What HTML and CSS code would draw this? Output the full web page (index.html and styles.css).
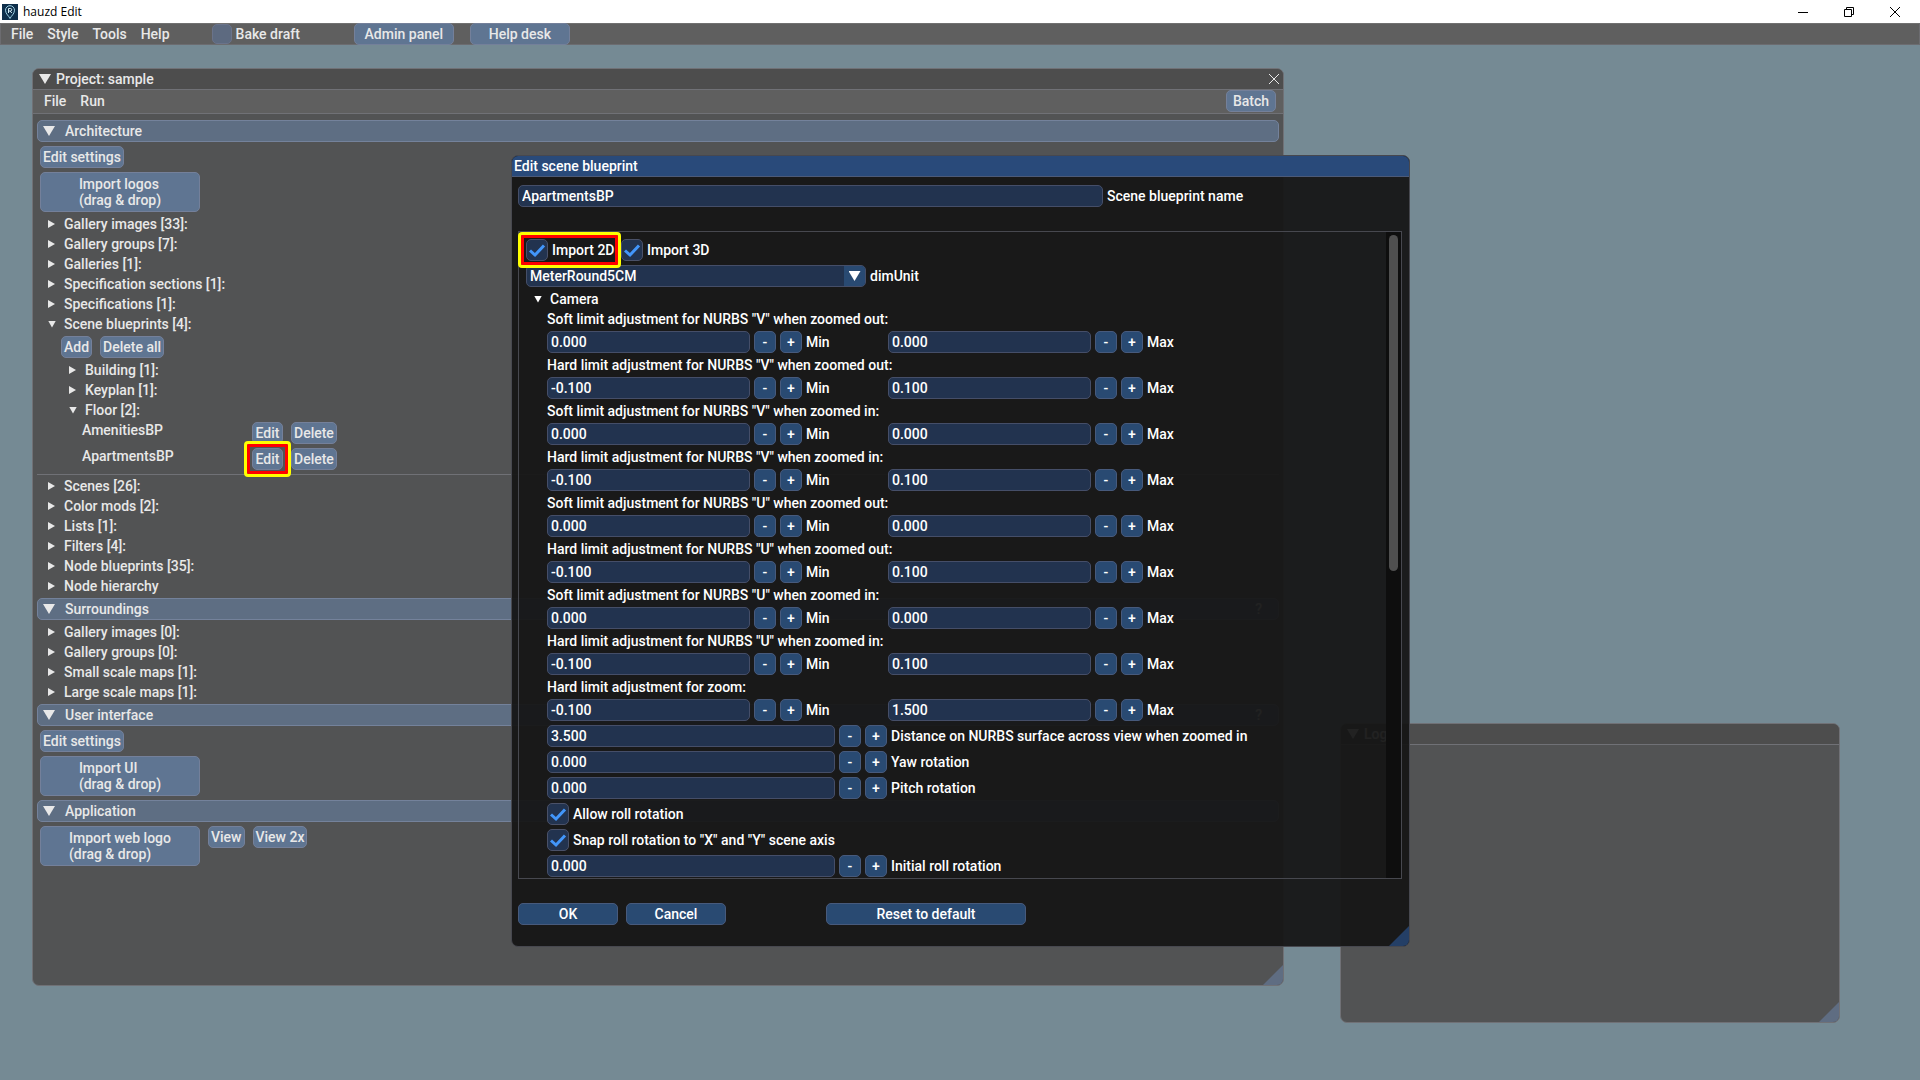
FILE: index.html
```
<!DOCTYPE html>
<html lang="en">
<head>
    <meta charset="UTF-8">
    <meta name="viewport" content="width=device-width, initial-scale=1.0">
    <title>hauzd Edit</title>
    <link rel="stylesheet" href="styles.css">
</head>
<body>
    <header class="titlebar">
        <svg class="logo" viewBox="0 0 16 16">
            <rect width="16" height="16" fill="#0f2f4b"/>
            <path d="M8 14.5 C7 12 3.5 10 3.5 6.2 A4.5 4.5 0 0 1 12.5 6.2 C12.5 10 9 12 8 14.5 Z" fill="none" stroke="#9fd3e6"/>
            <path d="M6.5 9 V4.500 H8.500 A1.200 1.200 0 0 1 8.500 7 H6.500 M8 7 L9.800 9" fill="none" stroke="#d5eef6"/>
        </svg>
        <span class="app-name">hauzd Edit</span>
        <div class="window-controls">
            <button aria-label="Minimize"><svg viewBox="0 0 10 10"><path d="M0 5.500H10"/></svg></button>
            <button aria-label="Restore"><svg viewBox="0 0 10 10"><path d="M.5 2.500H7.500V9.500H.5ZM2.500 2.500V.5H9.500V7.500H7.500"/></svg></button>
            <button aria-label="Close"><svg viewBox="0 0 10 10"><path d="M0 0L10 10M10 0L0 10"/></svg></button>
        </div>
    </header>

    <nav class="menubar">
        <a href="#">File</a>
        <a href="#">Style</a>
        <a href="#">Tools</a>
        <a href="#">Help</a>
        <label class="check bake"><input type="checkbox"> Bake draft</label>
        <button class="btn wide">Admin panel</button>
        <button class="btn wide">Help desk</button>
    </nav>

    <main class="desktop">
        <section class="window project">
            <div class="window-title">
                <span class="arrow down"></span>
                <span>Project: sample</span>
                <button class="close" aria-label="Close"><svg viewBox="0 0 12 12"><path d="M1 1L11 11M11 1L1 11"/></svg></button>
            </div>
            <nav class="window-menu">
                <a href="#">File</a>
                <a href="#">Run</a>
                <button class="btn batch">Batch</button>
            </nav>
            <div class="window-body">
                <div class="section"><span class="arrow down"></span>Architecture</div>
                <div class="row"><button class="btn">Edit settings</button></div>
                <div class="row"><button class="btn drop"><span>Import logos<br>(drag &amp; drop)</span></button></div>
                <div class="node"><span class="arrow small right"></span>Gallery images [33]:</div>
                <div class="node"><span class="arrow small right"></span>Gallery groups [7]:</div>
                <div class="node"><span class="arrow small right"></span>Galleries [1]:</div>
                <div class="node"><span class="arrow small right"></span>Specification sections [1]:</div>
                <div class="node"><span class="arrow small right"></span>Specifications [1]:</div>
                <div class="node"><span class="arrow small down"></span>Scene blueprints [4]:</div>
                <div class="row level-1">
                    <button class="btn">Add</button>
                    <button class="btn">Delete all</button>
                </div>
                <div class="node level-1"><span class="arrow small right"></span>Building [1]:</div>
                <div class="node level-1"><span class="arrow small right"></span>Keyplan [1]:</div>
                <div class="node level-1"><span class="arrow small down"></span>Floor [2]:</div>
                <div class="row level-2">
                    <span class="bp-name">AmenitiesBP</span>
                    <button class="btn">Edit</button>
                    <button class="btn">Delete</button>
                </div>
                <div class="row level-2">
                    <span class="bp-name">ApartmentsBP</span>
                    <span class="marked"><button class="btn">Edit</button></span>
                    <button class="btn">Delete</button>
                </div>
                <hr>
                <div class="node"><span class="arrow small right"></span>Scenes [26]:</div>
                <div class="node"><span class="arrow small right"></span>Color mods [2]:</div>
                <div class="node"><span class="arrow small right"></span>Lists [1]:</div>
                <div class="node"><span class="arrow small right"></span>Filters [4]:</div>
                <div class="node"><span class="arrow small right"></span>Node blueprints [35]:</div>
                <div class="node"><span class="arrow small right"></span>Node hierarchy</div>
                <div class="section"><span class="arrow down"></span>Surroundings<span class="hint">?</span></div>
                <div class="node"><span class="arrow small right"></span>Gallery images [0]:</div>
                <div class="node"><span class="arrow small right"></span>Gallery groups [0]:</div>
                <div class="node"><span class="arrow small right"></span>Small scale maps [1]:</div>
                <div class="node"><span class="arrow small right"></span>Large scale maps [1]:</div>
                <div class="section"><span class="arrow down"></span>User interface<span class="hint">?</span></div>
                <div class="row"><button class="btn">Edit settings</button></div>
                <div class="row"><button class="btn drop"><span>Import UI<br>(drag &amp; drop)</span></button></div>
                <div class="section"><span class="arrow down"></span>Application</div>
                <div class="row">
                    <button class="btn drop"><span>Import web logo<br>(drag &amp; drop)</span></button>
                    <button class="btn">View</button>
                    <button class="btn">View 2x</button>
                </div>
            </div>
        </section>

        <section class="window log">
            <div class="window-title">
                <span class="arrow down"></span>
                <span>Log</span>
            </div>
        </section>

        <form class="window dialog">
            <div class="window-title">Edit scene blueprint</div>
            <div class="dialog-body">
                <div class="field">
                    <input type="text" id="bp-name" value="ApartmentsBP">
                    <label for="bp-name">Scene blueprint name</label>
                </div>
                <div class="panel">
                    <div class="panel-content">
                        <div class="field imports">
                            <label class="check marked"><input type="checkbox" checked> Import 2D</label>
                            <label class="check"><input type="checkbox" checked> Import 3D</label>
                        </div>
                        <div class="field">
                            <span class="select">
                                <select id="dim-unit"><option>MeterRound5CM</option></select>
                                <span class="select-arrow"><span class="arrow down"></span></span>
                            </span>
                            <label for="dim-unit">dimUnit</label>
                        </div>
                        <div class="node camera"><span class="arrow small down"></span>Camera</div>
                        <div class="settings" id="settings"></div>
                    </div>
                    <div class="scrollbar"><div class="thumb"></div></div>
                </div>
                <div class="actions">
                    <button type="button" class="btn wide">OK</button>
                    <button type="button" class="btn wide">Cancel</button>
                    <button type="button" class="btn reset">Reset to default</button>
                </div>
            </div>
        </form>
    </main>

    <script src="script.js"></script>
</body>
</html>
```
FILE: styles.css
```
* {
    box-sizing: border-box;
}

body {
    margin: 0;
    height: 100vh;
    display: flex;
    flex-direction: column;
    overflow: hidden;
    background-color: #758a94;
    font-family: Roboto, sans-serif;
    font-size: 14px;
    font-weight: 500;
    line-height: 16px;
    color: #e8e8e8;
}

button,
input,
select {
    font: inherit;
    color: inherit;
}

a {
    color: inherit;
    text-decoration: none;
}

/* system title bar */
.titlebar {
    display: flex;
    align-items: center;
    height: 23px;
    padding: 0 2px;
    background-color: #fff;
    color: #000;
}

.logo {
    width: 16px;
    height: 16px;
}

.app-name {
    margin-left: 5px;
    font-family: "Open Sans", sans-serif;
    font-size: 12px;
    font-weight: 400;
}

.window-controls {
    display: flex;
    margin-left: auto;
}

.window-controls button {
    width: 46px;
    height: 20px;
    padding: 0;
    border: none;
    background: none;
}

.window-controls svg {
    display: block;
    width: 10px;
    height: 10px;
    margin: 0 auto;
    fill: none;
    stroke: #000;
}

.menubar {
    display: flex;
    align-items: center;
    gap: 14px;
    height: 22px;
    padding-left: 10px;
    background-color: #5f5f5f;
    border: 1px solid #6c6c70;
    border-top-color: #717171;
}

.menubar .btn {
    margin-left: 2px;
}

.bake {
    margin: 0 38px 0 28px;
}

/* buttons */
.btn {
    min-width: 31px;
    height: 22px;
    padding: 0 2px;
    border: 1px solid #74809a;
    border-radius: 5px;
    background-color: #5f7592;
    white-space: nowrap;
}

.btn.wide {
    width: 100px;
}

.btn.drop {
    width: 160px;
    height: 40px;
}

.btn.drop span {
    display: inline-block;
    text-align: left;
}

.btn.batch {
    width: 50px;
    margin-left: auto;
}

/* arrows */
.arrow {
    flex: none;
    width: 12px;
    height: 10px;
    background-color: currentColor;
    clip-path: polygon(0 0, 100% 0, 50% 100%);
}

.arrow.small {
    width: 8px;
    height: 7px;
}

.arrow.small.right {
    width: 7px;
    height: 8px;
    clip-path: polygon(0 0, 100% 50%, 0 100%);
}

/* windows */
.desktop {
    position: relative;
    flex: 1;
}

.window {
    position: absolute;
    overflow: hidden;
    border: 1px solid #707176;
    border-radius: 7px;
    background-color: #525354;
}

/* resize grip */
.window::after {
    content: "";
    position: absolute;
    right: 0;
    bottom: 0;
    width: 20px;
    height: 20px;
    background-color: #5f6d82;
    clip-path: polygon(100% 0, 100% 100%, 0 100%);
}

.window-title {
    display: flex;
    align-items: center;
    gap: 5px;
    height: 21px;
    padding: 0 2px 0 6px;
    border-bottom: 1px solid #707176;
    background-color: #4d4d4d;
}

.close {
    width: 14px;
    height: 16px;
    margin-left: auto;
    padding: 0;
    border: none;
    background: none;
}

.close svg {
    display: block;
    width: 12px;
    height: 12px;
    margin-left: 1px;
    stroke: #e8e8e8;
}

.window-menu {
    display: flex;
    align-items: center;
    gap: 14px;
    height: 24px;
    padding: 0 7px 1px 11px;
    border-bottom: 1px solid #707176;
    background-color: #5f5f5f;
}

.project {
    left: 32px;
    top: 23px;
    width: 1252px;
    height: 918px;
}

.log {
    left: 1340px;
    top: 678px;
    width: 500px;
    height: 300px;
}

.window-body {
    display: flex;
    flex-direction: column;
    gap: 4px;
    padding: 6px 4px;
}

.section {
    display: flex;
    align-items: center;
    gap: 10px;
    height: 22px;
    padding: 0 16px 0 5px;
    border: 1px solid #74829b;
    border-radius: 5px;
    background-color: #5e6e83;
}

.hint {
    margin-left: auto;
}

.row {
    display: flex;
    align-items: flex-start;
    gap: 8px;
    padding-left: 3px;
}

.node {
    display: flex;
    align-items: center;
    height: 16px;
    padding-left: 11px;
}

.node .arrow {
    margin-right: 8px;
}

.node .right {
    margin-right: 9px;
}

.row.level-1 {
    padding-left: 24px;
}

.node.level-1 {
    padding-left: 32px;
}

.row.level-2 {
    padding-left: 45px;
}

.bp-name {
    width: 162px;
}

hr {
    width: 100%;
    height: 1px;
    margin: 0 0 -1px;
    border: none;
    background-color: #707176;
}

/* red and yellow frame round a control */
.marked {
    position: relative;
    display: flex;
}

.marked::after {
    content: "";
    position: absolute;
    inset: -7px -8px;
    z-index: 1;
    border: 3px solid #ff0;
    border-radius: 4px;
    box-shadow: inset 0 0 0 3px #f00;
    pointer-events: none;
}

/* check boxes */
.check {
    display: flex;
    align-items: center;
    gap: 4px;
    white-space: nowrap;
}

.check input {
    appearance: none;
    flex: none;
    width: 22px;
    height: 22px;
    margin: 0;
    border: 1px solid #4a5168;
    border-radius: 5px;
    background-color: #22334f;
}

.check input:checked {
    background-image: url("data:image/svg+xml,%3Csvg xmlns='http://www.w3.org/2000/svg' viewBox='0 0 20 20'%3E%3Cpath d='M3 10.500L8 15L17 5.500' fill='none' stroke='%234296fa' stroke-width='3'/%3E%3C/svg%3E");
}

.bake input {
    width: 20px;
    height: 20px;
    border-color: #6a738a;
    background-color: #5d6a80;
}

/* dialog */
.dialog {
    left: 511px;
    top: 110px;
    width: 899px;
    height: 792px;
    border-color: #47484f;
    background-color: rgba(21, 21, 21, 0.94);
    color: #fff;
}

.dialog::after {
    background-color: #243f66;
}

.dialog .window-title {
    padding-left: 2px;
    border-color: #4c5a78;
    background-color: #294a7a;
}

.dialog .btn {
    border-color: #475a7c;
    background-color: #294a72;
}

.dialog-body {
    padding: 8px 7px 0 6px;
}

.field {
    display: flex;
    align-items: center;
    gap: 4px;
    height: 22px;
}

.field input[type="text"],
.field select {
    height: 22px;
    padding: 0 3px;
    border: 1px solid #454e68;
    border-radius: 5px;
    background-color: #22334f;
}

#bp-name {
    width: 585px;
}

.panel {
    display: flex;
    height: 648px;
    margin-top: 24px;
    border: 1px solid #47484f;
}

.panel-content {
    flex: 1;
    display: flex;
    flex-direction: column;
    gap: 4px;
    padding: 7px;
}

.imports {
    gap: 8px;
}

.imports .check {
    width: 87px;
}

.camera {
    padding-left: 8px;
}

.select {
    position: relative;
    width: 340px;
}

.select select {
    display: block;
    width: 100%;
    appearance: none;
}

.select-arrow {
    position: absolute;
    top: 1px;
    right: 1px;
    display: flex;
    align-items: center;
    justify-content: center;
    width: 21px;
    height: 20px;
    border-radius: 0 4px 4px 0;
    background-color: #294a72;
    pointer-events: none;
}

.settings {
    display: flex;
    flex-direction: column;
    gap: 4px;
    padding-left: 21px;
}

.caption {
    height: 16px;
}

.pair {
    display: grid;
    grid-template-columns: 341px 341px;
}

.btn.step {
    width: 22px;
    min-width: 22px;
}

.pair input {
    width: 203px;
}

.single input[type="text"] {
    width: 288px;
}

.scrollbar {
    width: 15px;
    padding: 3px;
    background-color: #0e0e0e;
}

.thumb {
    width: 9px;
    height: 336px;
    border-radius: 5px;
    background-color: #4f4f4f;
}

.actions {
    display: flex;
    gap: 8px;
    margin-top: 24px;
}

.btn.reset {
    width: 200px;
    margin-left: 92px;
}
```
FILE: script.js
```
const settings = document.getElementById('settings');

const limits = [
    ['Soft limit adjustment for NURBS "V" when zoomed out:', '0.000', '0.000'],
    ['Hard limit adjustment for NURBS "V" when zoomed out:', '-0.100', '0.100'],
    ['Soft limit adjustment for NURBS "V" when zoomed in:', '0.000', '0.000'],
    ['Hard limit adjustment for NURBS "V" when zoomed in:', '-0.100', '0.100'],
    ['Soft limit adjustment for NURBS "U" when zoomed out:', '0.000', '0.000'],
    ['Hard limit adjustment for NURBS "U" when zoomed out:', '-0.100', '0.100'],
    ['Soft limit adjustment for NURBS "U" when zoomed in:', '0.000', '0.000'],
    ['Hard limit adjustment for NURBS "U" when zoomed in:', '-0.100', '0.100'],
    ['Hard limit adjustment for zoom:', '-0.100', '1.500']
];

function numberField(id, value, label, type = '') {
    return `<div class="field ${type}">
        <input type="text" id="${id}" value="${value}">
        <button type="button" class="btn step">-</button>
        <button type="button" class="btn step">+</button>
        <label for="${id}">${label}</label>
    </div>`;
}

function checkField(label) {
    return `<div class="field"><label class="check"><input type="checkbox" checked> ${label}</label></div>`;
}

let html = '';

limits.forEach(([caption, min, max], index) => {
    html += `<div class="caption">${caption}</div>
        <div class="pair">
            ${numberField('min-' + index, min, 'Min')}
            ${numberField('max-' + index, max, 'Max')}
        </div>`;
});

html += numberField('distance', '3.500', 'Distance on NURBS surface across view when zoomed in', 'single');
html += numberField('yaw', '0.000', 'Yaw rotation', 'single');
html += numberField('pitch', '0.000', 'Pitch rotation', 'single');
html += checkField('Allow roll rotation');
html += checkField('Snap roll rotation to "X" and "Y" scene axis');
html += numberField('roll', '0.000', 'Initial roll rotation', 'single');

settings.innerHTML = html;
```
